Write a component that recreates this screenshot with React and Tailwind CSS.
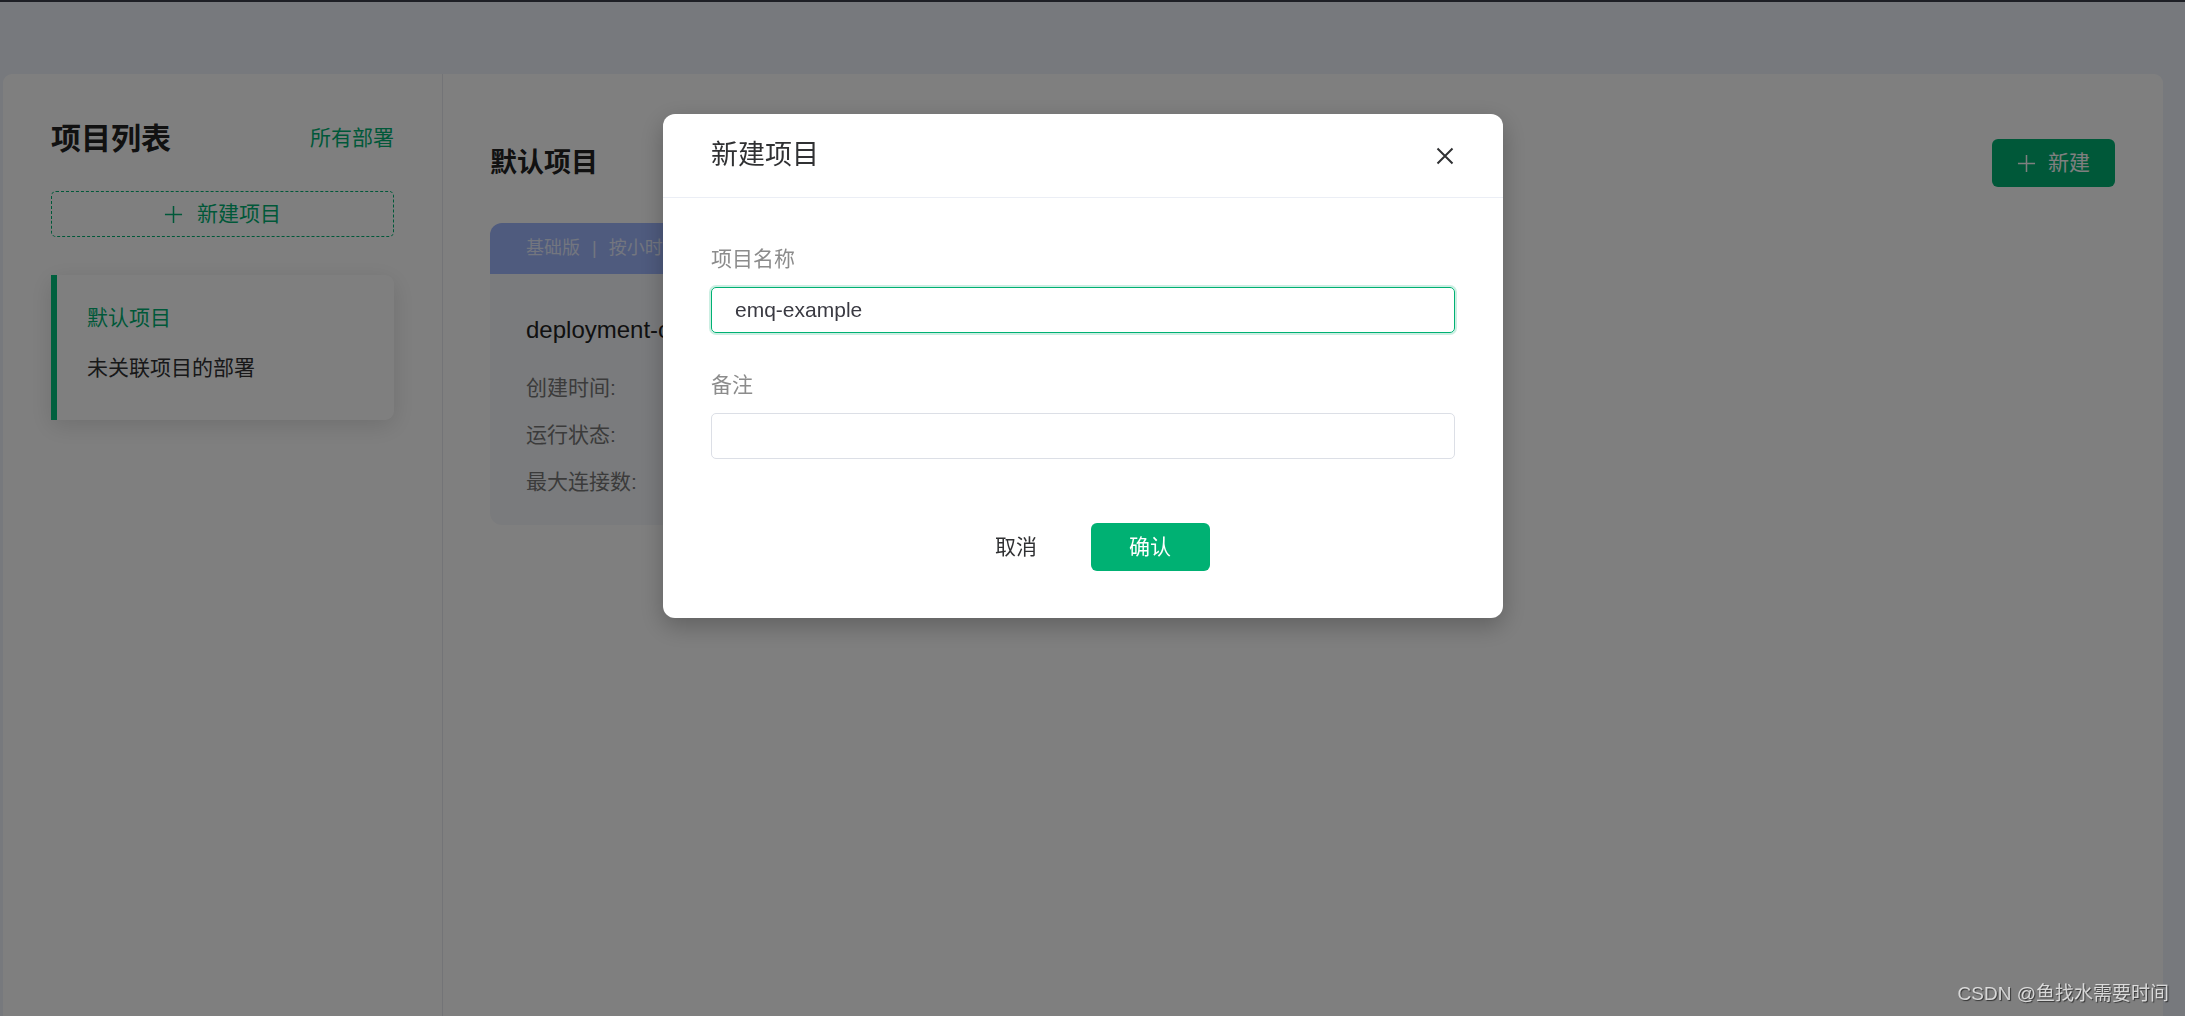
import { useState } from "react";

const font = "font-['Liberation_Sans','Noto_Sans_CJK_SC',sans-serif]";

function PlusIcon({ className }) {
  return (
    <svg className={className} viewBox="0 0 20 20" fill="none" stroke="currentColor" strokeWidth="1.6">
      <path d="M10 1v18M1 10h18" />
    </svg>
  );
}

function Sidebar() {
  return (
    <aside className="w-[440px] shrink-0 border-r border-[#e6e9ef] px-[48px] pt-[48px]">
      <div className="flex h-[32px] items-center justify-between">
        <h2 className="text-[30px] font-bold text-[#222]">项目列表</h2>
        <a className="text-[21px] text-[#00b173]">所有部署</a>
      </div>
      <button className="mt-[37px] flex h-[46px] w-full items-center justify-center gap-[14px] rounded-[5px] border border-dashed border-[#00b173] text-[21px] text-[#00b173]">
        <PlusIcon className="h-[19px] w-[19px]" />
        新建项目
      </button>
      <div className="mt-[38px] flex h-[145px] flex-col gap-[18px] rounded-r-[9px] border-l-[6px] border-[#00c07c] bg-white pl-[30px] pt-[27px] text-[21px] leading-[32px] shadow-[0_6px_24px_rgba(0,0,0,0.13)]">
        <div className="text-[#00b173]">默认项目</div>
        <div className="text-[#303133]">未关联项目的部署</div>
      </div>
    </aside>
  );
}

function DeploymentCard() {
  const rows = ["创建时间:", "运行状态:", "最大连接数:"];
  return (
    <div className="mt-[36px] w-[480px] overflow-hidden rounded-[12px]">
      <div className="flex h-[51px] items-center bg-[#9eb6fd] px-[36px] text-[18px] text-white/75">
        <span>基础版</span>
        <span className="mx-[12px]">|</span>
        <span>按小时计费</span>
      </div>
      <div className="bg-[#f5f7fa] px-[36px] pb-[27px] pt-[40px]">
        <div className="text-[24px] leading-[32px] text-[#222]">deployment-c3f8a21</div>
        <div className="mt-[26px] flex flex-col gap-[15px] text-[21px] leading-[32px] text-[#777]">
          {rows.map((r) => (
            <div key={r}>{r}</div>
          ))}
        </div>
      </div>
    </div>
  );
}

function Modal({ name, setName }) {
  return (
    <div className="fixed inset-0 flex justify-center bg-black/50 pr-[19px] pt-[114px]">
      <div className="h-[504px] w-[840px] rounded-[12px] bg-white shadow-[0_8px_24px_rgba(0,0,0,0.25)]">
        <div className="flex h-[84px] items-center justify-between border-b border-[#ebeef5] px-[48px]">
          <h3 className="text-[27px] text-[#303133]">新建项目</h3>
          <button className="flex h-[20px] w-[20px] items-center justify-center text-[#303133]">
            <svg viewBox="0 0 20 20" className="h-[20px] w-[20px]" fill="none" stroke="currentColor" strokeWidth="2">
              <path d="M2.5 2.5l15 15M17.5 2.5l-15 15" />
            </svg>
          </button>
        </div>
        <div className="px-[48px] pt-[45px]">
          <label className="block text-[21px] leading-[32px] text-[#8c8c8c]">项目名称</label>
          <input
            value={name}
            onChange={(e) => setName(e.target.value)}
            className="mt-[12px] block h-[46px] w-full rounded-[5px] border border-[#00b173] px-[23px] text-[21px] text-[#3a3a42] shadow-[0_0_0_2px_rgba(0,177,115,0.2)] outline-none"
          />
          <label className="mt-[36px] block text-[21px] leading-[32px] text-[#8c8c8c]">备注</label>
          <input className="mt-[12px] block h-[46px] w-full rounded-[5px] border border-[#dcdfe6] px-[23px] text-[21px] outline-none" />
          <div className="mt-[64px] flex justify-center gap-[15px]">
            <button className="h-[48px] w-[119px] text-[21px] text-[#303133]">取消</button>
            <button className="h-[48px] w-[119px] rounded-[6px] bg-[#00b173] text-[21px] text-white">确认</button>
          </div>
        </div>
      </div>
    </div>
  );
}

export default function App() {
  const [name, setName] = useState("emq-example");
  return (
    <div className={`min-h-screen bg-[#eef3fa] ${font}`}>
      <div className="h-[2px] bg-[#3a3f4a]" />
      <div className="pl-[3px] pr-[22px] pt-[72px]">
        <div className="flex h-[942px] rounded-t-[9px] bg-white">
          <Sidebar />
          <main className="flex-1 pl-[47px] pr-[48px] pt-[65px]">
            <div className="flex h-[48px] items-center justify-between">
              <h1 className="text-[27px] font-bold text-[#222]">默认项目</h1>
              <button className="flex h-[48px] w-[123px] items-center gap-[12px] rounded-[6px] bg-[#00b173] pl-[25px] text-[21px] text-white">
                <PlusIcon className="h-[19px] w-[19px]" />
                新建
              </button>
            </div>
            <DeploymentCard />
          </main>
        </div>
      </div>
      <Modal name={name} setName={setName} />
      <div className="fixed bottom-[8px] right-[16px] text-[19px] text-white/75 [text-shadow:1px_1px_1px_rgba(0,0,0,0.6)]">
        CSDN @鱼找水需要时间
      </div>
    </div>
  );
}
